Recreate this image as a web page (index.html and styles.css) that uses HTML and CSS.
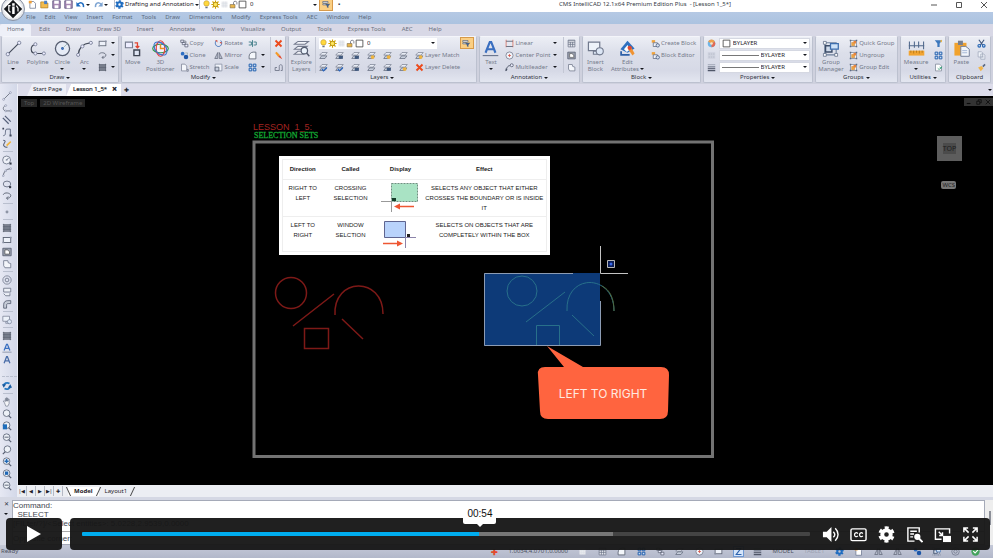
FILE: index.html
```html
<!DOCTYPE html>
<html lang="en">
<head>
<meta charset="utf-8">
<title>CMS IntelliCAD - Lesson 1_5</title>
<link rel="stylesheet" href="styles.css">
</head>
<body>
<svg class="defs" aria-hidden="true">
  <symbol id="line" viewBox="0 0 24 24"><path d="M4 20 20 4" stroke="#444b5a" stroke-width="1.6"/><g fill="#eef" stroke="#8289a0" stroke-width="1.4"><circle cx="4" cy="20" r="2.4"/><circle cx="20" cy="4" r="2.4"/></g></symbol>
  <symbol id="pline" viewBox="0 0 24 24"><path d="M20 19H10C1 19 1 8 9 6" stroke="#444b5a" stroke-width="1.6"/><g fill="#eef" stroke="#8289a0" stroke-width="1.4"><circle cx="21" cy="19" r="2.2"/><circle cx="9" cy="19" r="2.2"/><circle cx="9" cy="6" r="2.2"/></g></symbol>
  <symbol id="circle" viewBox="0 0 24 24"><circle cx="12" cy="12" r="10" fill="#e6ebf6" stroke="#555d70" stroke-width="1.8"/><circle cx="12" cy="12" r="2" fill="#2f62b5"/><path d="m12 12 7-7" stroke="#8aa" /></symbol>
  <symbol id="arc" viewBox="0 0 24 24"><path d="M3 21C4 11 10 5 20 4" stroke="#444b5a" stroke-width="1.8"/><g fill="#eef" stroke="#8289a0" stroke-width="1.4"><circle cx="3" cy="21" r="2.2"/><circle cx="9" cy="9" r="2.2"/><circle cx="21" cy="4" r="2.2"/></g></symbol>
  <symbol id="rect" viewBox="0 0 24 24"><rect x="3" y="6" width="18" height="12" fill="#eef2fa" stroke="#5b6272" stroke-width="2.2"/><path d="M1 16h4v4H1zM19 4h4v4h-4z" fill="#8b92a5"/></symbol>
  <symbol id="rev" viewBox="0 0 24 24"><path d="M3 9c2-7 18-5 18 2 0 5-6 7-10 6l3 4M11 17l4-4" stroke="#5b6272" stroke-width="2.2"/></symbol>
  <symbol id="hatch" viewBox="0 0 24 24"><path d="M4 4h16v16H4z" fill="#8b919f"/><path d="M2 4h20M2 8h20M2 12h20M2 16h20M2 20h20M4 2v20M20 2v20" stroke="#4d5463" stroke-width="1.6"/></symbol>
  <symbol id="move" viewBox="0 0 24 24"><path d="M2 3h10v8H2z" fill="#eef" stroke="#777e90" stroke-width="1.6"/><path d="M14 14h8v8h-8z" fill="#dfe5f3" stroke="#3e4452" stroke-width="2"/><path d="M15 4h4v7M16.500 8.500 19 11l2.500-2.500" stroke="#e3442f" stroke-width="1.8"/></symbol>
  <symbol id="orbit" viewBox="0 0 24 24"><circle cx="12" cy="12" r="8.500" fill="#f3f1fa" stroke="#b25ac0" stroke-width="1.300"/><ellipse cx="12" cy="12" rx="11" ry="6" stroke="#2e9b4b" stroke-width="1.600"/><ellipse cx="12" cy="12" rx="6" ry="11" stroke="#e5453b" stroke-width="1.600"/><ellipse cx="12" cy="12" rx="11" ry="7" stroke="#3a74d0" stroke-width="1.500" transform="rotate(45 12 12)"/><path d="M12 6v6h5" stroke="#e69022" stroke-width="2"/></symbol>
  <symbol id="copy" viewBox="0 0 24 24"><path d="M2 3h8v6H2zM6 9h8v6H6zM13 14h8v7h-8z" fill="#eef" stroke="#596072" stroke-width="2"/><path d="m11 5 5 1v5" stroke="#596072" stroke-width="1.600"/></symbol>
  <symbol id="clone" viewBox="0 0 24 24"><circle cx="7" cy="7" r="5" fill="#2d6fc4"/><circle cx="16" cy="16" r="6" fill="#1d57a8"/><path d="M14 5h6v5" stroke="#9aa" stroke-width="2"/></symbol>
  <symbol id="stretch" viewBox="0 0 24 24"><path d="M4 3h9l5 5v13H4z" fill="#f4f6fb" stroke="#7b8294" stroke-width="2"/><path d="M18 17h4v5h-4" stroke="#596072" stroke-width="1.600"/></symbol>
  <symbol id="rotate" viewBox="0 0 24 24"><path d="M6 4c-5 6-2 16 6 16s11-10 6-16" stroke="#3c6fb8" stroke-width="2.600"/><path d="M3 3h6v6zM15 8h5v6z" fill="#d84d3a"/></symbol>
  <symbol id="mirror" viewBox="0 0 24 24"><path d="M10 4v16H2zM14 4v16h8z" fill="#b8bfce" stroke="#596072" stroke-width="1.800"/></symbol>
  <symbol id="scale" viewBox="0 0 24 24"><path d="M3 3h18v18H3z" fill="#f0f3fa" stroke="#868da0" stroke-width="2"/><path d="M3 11h10v10H3z" fill="#c9d0df" stroke="#4f5668" stroke-width="2"/></symbol>
  <symbol id="trim" viewBox="0 0 24 24"><path d="M12 3v18M2 8h7v8H2M15 8h7v8h-7" stroke="#3d7a86" stroke-width="2.400"/></symbol>
  <symbol id="fillet" viewBox="0 0 24 24"><path d="M3 21V14C3 8 8 3 14 3h7v18z" fill="#f4f7fb" stroke="#586070" stroke-width="2.200"/></symbol>
  <symbol id="array" viewBox="0 0 24 24"><path d="M3 3h7v7H3zM14 3h7v7h-7zM3 14h7v7H3zM14 14h7v7h-7z" fill="#c8dcf5" stroke="#2160ad" stroke-width="2.600"/></symbol>
  <symbol id="cross" viewBox="0 0 24 24"><path d="m4 4 16 16M20 4 4 20" stroke="#ec4a1c" stroke-width="5"/></symbol>
  <symbol id="pencil" viewBox="0 0 24 24"><path d="m3 5 4-3 9 9-5 4z" fill="#f59a26"/><path d="m11 15 5-4 6 11z" fill="#e4492c"/></symbol>
  <symbol id="unlock" viewBox="0 0 24 24"><path d="M3 12h13v9H3z" fill="#e7b54b" stroke="#806c4c" stroke-width="1.600"/><path d="M12 12V7c0-5 9-5 9 0v5" stroke="#6c7080" stroke-width="2.200"/></symbol>
  <symbol id="hook" viewBox="0 0 24 24"><path d="M3 20h11V9c0-6 8-6 8 0v11h-4M3 20v-8h5" stroke="#6b7284" stroke-width="2.200"/></symbol>
  <symbol id="layers" viewBox="0 0 24 24"><g fill="#f3f5fa" stroke="#747b8e" stroke-width="1.500"><path d="m2 20 5-4h13l-5 4z"/><path d="m2 13 5-4h13l-5 4z"/><path d="m2 6 5-4h15l-5 4z"/></g><circle cx="16" cy="15" r="4.500" fill="#eaf2fb" stroke="#555d70" stroke-width="1.600"/><path d="m19 18 4 5" stroke="#555d70" stroke-width="2"/></symbol>
  <symbol id="bulb" viewBox="0 0 24 24"><path d="M8 16C3 11 4 2 12 2s9 9 4 14z" fill="#ffd83d" stroke="#b9902a" stroke-width="1.600"/><path d="M9 18h6v4H9z" fill="#687184"/></symbol>
  <symbol id="sun" viewBox="0 0 24 24"><path d="M12 1v22M1 12h22M4 4l16 16M20 4 4 20" stroke="#d5a400" stroke-width="3"/><circle cx="12" cy="12" r="6" fill="#ffe65c" stroke="#a47e00" stroke-width="2"/></symbol>
  <symbol id="faint" viewBox="0 0 24 24"><path d="M4 4h16v16H4z" fill="#e8eaef"/><path d="M4 9h16M4 15h16M9 4v16M15 4v16" stroke="#d8dbe3"/></symbol>
  <symbol id="square" viewBox="0 0 24 24"><path d="M3 3h18v18H3z" fill="#fff" stroke="#444" stroke-width="2.200"/></symbol>
  <symbol id="lay" viewBox="0 0 24 24"><path d="m2 11 6-7h14l-6 7z" fill="#e9edf5" stroke="#737a8c" stroke-width="1.800"/><path d="m2 20 5-7h14l-5 7z" fill="#c8cfdd" stroke="#596275" stroke-width="1.800"/></symbol>
  <symbol id="layb" viewBox="0 0 24 24"><use href="#lay"/><path d="m8 16 4 5 9-9" stroke="#2d67bd" stroke-width="3.500"/></symbol>
  <symbol id="layo" viewBox="0 0 24 24"><use href="#lay"/><circle cx="15" cy="16" r="5" fill="#efb43f"/></symbol>
  <symbol id="layd" viewBox="0 0 24 24"><use href="#lay"/><path d="M10 13h11v8H10z" fill="#40597e"/></symbol>
  <symbol id="funnel" viewBox="0 0 24 24"><path d="M2 4h14v4H2zM2 10h10v3H2z" fill="#fff" stroke="#44506a" stroke-width="1.600"/><path d="M8 10h14l-5 6v5l-4-2v-3z" fill="#486185"/></symbol>
  <symbol id="texta" viewBox="0 0 24 24"><path d="M5 18 11 3h2l6 15M8 13h8" stroke="#3a6fc0" stroke-width="3"/><path d="M1 22h22" stroke="#6d7790" stroke-width="1.600"/></symbol>
  <symbol id="linear" viewBox="0 0 24 24"><path d="M3 2v20M21 2v20" stroke="#d8604b" stroke-width="2"/><path d="M3 6h18M3 20h18" stroke="#5f687b" stroke-width="2.400"/><path d="M5 10h14v7H5z" fill="#e4e8f2"/></symbol>
  <symbol id="center" viewBox="0 0 24 24"><circle cx="12" cy="12" r="9.500" fill="#f1f4fa" stroke="#6d7589" stroke-width="2"/><path d="M12 8v8M8 12h8" stroke="#d45144" stroke-width="2"/></symbol>
  <symbol id="round" viewBox="0 0 24 24"><circle cx="11" cy="12" r="9.500" fill="#eef1f8" stroke="#6a7286" stroke-width="2"/><path d="M9 12h4M11 12l5-5" stroke="#56607a" stroke-width="2"/><path d="M18 18h5v5h-5z" fill="#2e3442"/></symbol>
  <symbol id="leader" viewBox="0 0 24 24"><path d="M3 21C5 9 9 7 14 7" stroke="#485063" stroke-width="2.400"/><circle cx="18" cy="6" r="4" fill="#eef" stroke="#485063" stroke-width="2"/><path d="m1 22 1-8 5 4z" fill="#485063"/></symbol>
  <symbol id="table" viewBox="0 0 24 24"><path d="M3 3h18v18H3z" fill="#f4f6fa" stroke="#6c7488" stroke-width="2"/><path d="M3 5h18M3 10h18M3 15h18M9 8v13M15 8v13" stroke="#6c7488" stroke-width="2"/></symbol>
  <symbol id="region" viewBox="0 0 24 24"><path d="M2 3h20v18H2z" fill="#9aa0ae" stroke="#555d70" stroke-width="2"/><path d="M7 7h6l5 4v6H7z" fill="#fff" stroke="#444" stroke-width="1.500"/></symbol>
  <symbol id="wipe" viewBox="0 0 24 24"><path d="M4 4h10l1 5 6 2v10H7l-3-5z" fill="#f3f5fa" stroke="#6f778a" stroke-width="2"/></symbol>
  <symbol id="block" viewBox="0 0 24 24"><path d="M2 3h16v12H2z" fill="#edf2fa" stroke="#71798d" stroke-width="1.700"/><path d="M9 16h9v4H9z" fill="#dce6f5" stroke="#71798d" stroke-width="1.500"/><circle cx="18" cy="16" r="5" fill="#dce6f5" stroke="#71798d" stroke-width="1.500"/></symbol>
  <symbol id="attr" viewBox="0 0 24 24"><path d="M12 1 22 12 12 18 2 13z" fill="#2e70c0"/><path d="m7 13 5-6 4 6-5 4z" fill="#fff"/><path d="m13 13 4-3 5 9-3 3z" fill="#f09332"/><circle cx="15" cy="11" r="3" fill="#de4935"/><path d="M3 16v5h12" stroke="#2e60a8" stroke-width="2.500"/></symbol>
  <symbol id="mkblock" viewBox="0 0 24 24"><path d="M2 3h9v7H2z" fill="#f0a33b"/><path d="M6 10h11v10H6z" fill="#eef2fa" stroke="#5c677e" stroke-width="2"/><circle cx="18" cy="17" r="4.500" fill="#d8e2f3" stroke="#41557a" stroke-width="2"/></symbol>
  <symbol id="wheel" viewBox="0 0 24 24"><circle cx="12" cy="12" r="10" fill="#6fb5e8"/><path d="M12 12 3 7A10 10 0 0 1 21 7z" fill="#f0a04b"/><path d="m12 12 9-5a10 10 0 0 1-9 15z" fill="#e46a55"/><circle cx="12" cy="12" r="3.500" fill="#f4e6c8"/></symbol>
  <symbol id="ltype" viewBox="0 0 24 24"><path d="M2 3h20v18H2z" fill="#cfd3df"/><path d="M4 8h16M4 16h16" stroke="#b0b5c3" stroke-width="2" stroke-dasharray="4 2"/></symbol>
  <symbol id="lweight" viewBox="0 0 24 24"><path d="M2 4h20" stroke="#666d80"/><path d="M2 9h20" stroke="#666d80" stroke-width="2"/><path d="M2 14h20" stroke="#4f5668" stroke-width="3"/><path d="M2 20h20" stroke="#4f5668" stroke-width="4"/></symbol>
  <symbol id="group" viewBox="0 0 24 24"><path d="M4 4h16v17H4z" stroke="#6c7f9b" stroke-width="1.500"/><path d="M5 8h9v9H5z" fill="#cfdaea" stroke="#3c4c68" stroke-width="2"/><path d="M12 5h11v8H12z" fill="#cfe3f8" stroke="#3f6fae" stroke-width="1.800"/><path d="M2 2h4v4H2zM18 19h4v4h-4zM2 19h4v4H2z" fill="#fff" stroke="#52617b"/></symbol>
  <symbol id="qgroup" viewBox="0 0 24 24"><path d="M4 4h16v16H4z" fill="#f7f8fb" stroke="#6f7c92" stroke-width="1.800"/><path d="M7 9h8v9H7z" fill="#f0a743" stroke="#a86a23"/><path d="M12 5h7v7h-7z" fill="#e9843b"/><path d="M2 2h4v4H2zM18 2h4v4h-4zM2 18h4v4H2zM18 18h4v4h-4z" fill="#5d6b83"/></symbol>
  <symbol id="measure" viewBox="0 0 24 24"><path d="M2 2v11M9 2v9M15 2v9M22 2v11M1 8h22" stroke="#51698c" stroke-width="1.500"/><path d="M1 15h22v7H1z" fill="#f1a431"/><path d="M4 15v3M8 15v4M12 15v3M16 15v4M20 15v3" stroke="#a56c12"/></symbol>
  <symbol id="filter" viewBox="0 0 24 24"><path d="M2 3h20l-7 9v9h-6v-9z" fill="#3c78bd"/><path d="m15 5 6-3v7z" fill="#f2b63c"/></symbol>
  <symbol id="refresh" viewBox="0 0 24 24"><path d="M4 3h11l5 5v13H4z" fill="#fff" stroke="#7c8597" stroke-width="2"/><path d="M10 14c2 4 8 3 9-2M21 10l-2 4-4-3" stroke="#2d9c72" stroke-width="2.400"/></symbol>
  <symbol id="paste" viewBox="0 0 24 24"><path d="M2 4h17v18H2z" fill="#f1a22d"/><path d="M7 1h7v6H7z" fill="#777f90"/><path d="M11 9h7l5 4v10H11z" fill="#f1f5fb" stroke="#74819a" stroke-width="1.400"/><path d="M13 15h7M13 18h7" stroke="#86a0c8"/></symbol>
  <symbol id="cut" viewBox="0 0 24 24"><path d="m5 2 10 14M19 2 9 16" stroke="#3f567c" stroke-width="3"/><circle cx="6" cy="18" r="3.500" stroke="#2264b4" stroke-width="3"/><circle cx="18" cy="18" r="3.500" stroke="#2264b4" stroke-width="3"/></symbol>
  <symbol id="pages" viewBox="0 0 24 24"><path d="M3 2h9l3 3v11H3zM10 8h8l3 3v11H10z" fill="#eef2f9" stroke="#98a1b5" stroke-width="1.800"/><path d="M12 14h6M12 18h6" stroke="#98a1b5"/></symbol>
  <symbol id="brush" viewBox="0 0 24 24"><path d="m14 8 6-6 3 3-6 6z" fill="#586782"/><path d="m3 12 9-4 5 6-7 8z" fill="#f2b54a"/></symbol>
  <symbol id="new" viewBox="0 0 24 24"><path d="M5 4h10l5 5v13H5z" fill="#fff" stroke="#6b7690" stroke-width="2"/><path d="M2 2h8v7H2z" fill="#f0a13a"/></symbol>
  <symbol id="open" viewBox="0 0 24 24"><path d="M2 5h8l3 3h8v13H2z" fill="#f3bb4d" stroke="#b1802a" stroke-width="2"/><path d="M11 2h8v9h-8z" fill="#4b7fc4"/></symbol>
  <symbol id="save" viewBox="0 0 24 24"><path d="M2 2h20v20H2z" fill="#a98bb6" stroke="#514b78" stroke-width="2"/><path d="M6 2h12v8H6zM7 14h10v8H7z" fill="#fff"/></symbol>
  <symbol id="undo" viewBox="0 0 24 24"><path d="M5 11c8-7 16-3 15 8" stroke="currentColor" stroke-width="4"/><path d="M1 5v12h12z" fill="currentColor"/></symbol>
  <symbol id="gear" viewBox="0 0 24 24"><circle cx="12" cy="12" r="9.500" stroke="currentColor" stroke-width="4" stroke-dasharray="5.400 4.550" stroke-dashoffset="2.700" transform="rotate(30 12 12)"/><circle cx="12" cy="12" r="6" stroke="currentColor" stroke-width="5.500"/></symbol>
  <symbol id="para" viewBox="0 0 24 24"><path d="m2 7 14 14M7 2l14 14" stroke="#56607a" stroke-width="3"/></symbol>
  <symbol id="spline" viewBox="0 0 24 24"><path d="M3 21c9 0 2-16 9-16h8v15" stroke="#56607a" stroke-width="2.200"/><path d="M1 2h4v4H1zM18 18h5v5h-5z" fill="#3d4558"/></symbol>
  <symbol id="sketch" viewBox="0 0 24 24"><path d="M3 3c12 2-4 9 2 14 4 4 6 3 8 2" stroke="#56607a" stroke-width="2.500"/><path d="m10 14 10-9 2 3-10 10z" fill="#f0b43d"/></symbol>
  <symbol id="ell" viewBox="0 0 24 24"><ellipse cx="12" cy="12" rx="9" ry="7" stroke="#6a7286" stroke-width="2.200"/><path d="M17 17h5v5h-5z" fill="#2e3442"/></symbol>
  <symbol id="dot" viewBox="0 0 24 24"><circle cx="12" cy="12" r="3.500" fill="#8e95a5"/></symbol>
  <symbol id="ring" viewBox="0 0 24 24"><circle cx="12" cy="12" r="10" stroke="#6a7286" stroke-width="1.800"/><circle cx="12" cy="12" r="4.500" stroke="#6a7286" stroke-width="2"/></symbol>
  <symbol id="sweep" viewBox="0 0 24 24"><path d="M4 3h17v9H4zM4 16l5 5h10v-6" fill="#edf0f6" stroke="#6a7286" stroke-width="2"/></symbol>
  <symbol id="pipe" viewBox="0 0 24 24"><path d="M4 22V14C4 7 8 4 14 4h7v7h-6c-3 0-4 1-4 4v7z" fill="#c6ccd8" stroke="#535c70" stroke-width="2"/></symbol>
  <symbol id="recycle" viewBox="0 0 24 24"><path d="M4 12C4 5 12 3 18 6M20 12c0 7-8 9-14 6" stroke="#2678c1" stroke-width="4.500"/><path d="M0 8h10l-6 8zM24 16H14l6-8z" fill="#195a9f"/></symbol>
  <symbol id="hand" viewBox="0 0 24 24"><path d="M6 14 3 10l2-1 3 2V4h2v6V2h2v8V3h2v7l1-5h2v11l-3 6H9z" fill="#f4f5f8" stroke="#697083" stroke-width="1.500"/></symbol>
  <symbol id="zoom" viewBox="0 0 24 24"><circle cx="11" cy="10" r="8" fill="#edf1f7" stroke="#666e81" stroke-width="2.200"/><path d="m16 16 6 6" stroke="#555d70" stroke-width="3"/></symbol>
  <symbol id="zoomb" viewBox="0 0 24 24"><use href="#zoom"/><path d="M11 5v10M6 10h10" stroke="#1f67b5" stroke-width="3.500"/></symbol>
  <symbol id="zoome" viewBox="0 0 24 24"><use href="#zoom"/><path d="M7 6h8v8H7z" fill="#1f67b5"/></symbol>
  <symbol id="zoomw" viewBox="0 0 24 24"><use href="#zoom"/><path d="M2 8h10v12H2z" fill="#1e6dbb"/></symbol>
  <symbol id="zoomm" viewBox="0 0 24 24"><use href="#zoom"/><path d="M6 10h10" stroke="#666e81" stroke-width="2.500"/></symbol>
</svg>

<div class="app">
  <header class="titlebar">
    <button class="logo" aria-label="Application menu"><svg viewBox="0 0 24 24"><path d="M12 1 23 12 12 23 1 12z" fill="#15171b"/><path d="M11 9h3v9h-3zM11 5h3v3h-3z" fill="#fff"/><path d="M9 8H7v6l2 2M16 8l2 3v4" stroke="#fff" stroke-width="1.500"/></svg></button>
    <div class="quick">
      <button aria-label="New"><svg class="s"><use href="#new"/></svg></button>
      <button aria-label="Open"><svg class="s"><use href="#open"/></svg></button>
      <button aria-label="Save"><svg class="s"><use href="#save"/></svg></button>
      <button aria-label="Save As"><svg class="s"><use href="#save"/></svg></button>
      <button class="blue" aria-label="Undo"><svg class="s"><use href="#undo"/></svg><i class="caret"></i></button>
      <button class="pale" aria-label="Redo"><svg class="s flip"><use href="#undo"/></svg><i class="caret"></i></button>
    </div>
    <div class="pick space blue"><svg class="s"><use href="#gear"/></svg><select aria-label="Workspace"><option>Drafting and Annotation</option></select><i class="caret"></i></div>
    <div class="pick toplayer"><svg class="s"><use href="#bulb"/></svg><svg class="s"><use href="#sun"/></svg><svg class="s"><use href="#faint"/></svg><svg class="s"><use href="#unlock"/></svg><svg class="s"><use href="#square"/></svg><select aria-label="Current layer"><option>0</option></select><i class="caret"></i></div>
    <button class="hot" aria-label="Layer filter"><svg class="s"><use href="#funnel"/></svg></button>
    <button class="more" aria-label="Customize">▪</button>
    <h1>CMS IntelliCAD 12.1x64 Premium Edition Plus&nbsp; - [Lesson 1_5*]</h1>
    <div class="winctl"><button aria-label="Minimize"><svg viewBox="0 0 8 8"><path d="M1 4h6" stroke="#555"/></svg></button><button aria-label="Maximize"><svg viewBox="0 0 8 8"><path d="M1.500 1.500h5v5h-5z" stroke="#555"/></svg></button><button aria-label="Close"><svg viewBox="0 0 8 8"><path d="m1 1 6 6M7 1 1 7" stroke="#555"/></svg></button></div>
  </header>

  <nav class="menubar"><a href="#">File</a><a href="#">Edit</a><a href="#">View</a><a href="#">Insert</a><a href="#">Format</a><a href="#">Tools</a><a href="#">Draw</a><a href="#">Dimensions</a><a href="#">Modify</a><a href="#">Express Tools</a><a href="#">AEC</a><a href="#">Window</a><a href="#">Help</a></nav>
  <nav class="tabs"><a class="on" href="#">Home</a><a href="#">Edit</a><a href="#">Draw</a><a href="#">Draw 3D</a><a href="#">Insert</a><a href="#">Annotate</a><a href="#">View</a><a href="#">Visualize</a><a href="#">Output</a><a href="#">Tools</a><a href="#">Express Tools</a><a href="#">AEC</a><a href="#">Help</a></nav>

  <section class="ribbon">
    <div class="panel"><div class="tools">
      <button class="big"><svg><use href="#line"/></svg>Line<i class="caret"></i></button>
      <button class="big"><svg><use href="#pline"/></svg>Polyline</button>
      <button class="big"><svg><use href="#circle"/></svg>Circle<i class="caret"></i></button>
      <button class="big"><svg><use href="#arc"/></svg>Arc<i class="caret"></i></button>
      <div class="col"><button aria-label="Rectangle"><svg class="s"><use href="#rect"/></svg><i class="caret"></i></button><button aria-label="Revision cloud"><svg class="s"><use href="#rev"/></svg><i class="caret"></i></button><button aria-label="Hatch"><svg class="s"><use href="#hatch"/></svg><i class="caret"></i></button></div>
    </div><button class="cap">Draw<i class="caret"></i></button></div>

    <div class="panel"><div class="tools">
      <button class="big"><svg><use href="#move"/></svg>Move</button>
      <button class="big"><svg><use href="#orbit"/></svg>3D<br>Positioner</button>
      <div class="col"><button><svg class="s"><use href="#copy"/></svg>Copy</button><button><svg class="s"><use href="#clone"/></svg>Clone</button><button><svg class="s"><use href="#stretch"/></svg>Stretch</button></div>
      <div class="col"><button><svg class="s"><use href="#rotate"/></svg>Rotate</button><button><svg class="s"><use href="#mirror"/></svg>Mirror</button><button><svg class="s"><use href="#scale"/></svg>Scale</button></div>
      <div class="col"><button aria-label="Trim"><svg class="s"><use href="#trim"/></svg></button><button aria-label="Fillet"><svg class="s"><use href="#fillet"/></svg><i class="caret"></i></button><button aria-label="Array"><svg class="s"><use href="#array"/></svg><i class="caret"></i></button></div>
      <div class="col ruled"><button aria-label="Erase"><svg class="s"><use href="#cross"/></svg></button><button aria-label="Explode"><svg class="s"><use href="#pencil"/></svg></button><button aria-label="Join"><svg class="s"><use href="#hook"/></svg></button></div>
    </div><button class="cap">Modify<i class="caret"></i></button></div>

    <div class="panel"><div class="tools">
      <button class="big"><svg><use href="#layers"/></svg>Explore<br>Layers</button>
      <div class="layergrid ruled">
        <div class="layerrow"><div class="pick"><svg class="s"><use href="#bulb"/></svg><svg class="s"><use href="#sun"/></svg><svg class="s"><use href="#faint"/></svg><svg class="s"><use href="#unlock"/></svg><svg class="s"><use href="#square"/></svg><select aria-label="Layer"><option>0</option></select><i class="caret"></i></div><button class="hot" aria-label="Layer filter"><svg class="s"><use href="#funnel"/></svg></button></div>
        <div class="layericons"><button aria-label="Isolate"><svg class="s"><use href="#lay"/></svg></button><button aria-label="Previous"><svg class="s"><use href="#layd"/></svg></button><button aria-label="State"><svg class="s"><use href="#layd"/></svg></button><button aria-label="Off"><svg class="s"><use href="#layo"/></svg></button><button aria-label="Freeze"><svg class="s"><use href="#layo"/></svg></button><button aria-label="Thaw"><svg class="s"><use href="#lay"/></svg></button><button><svg class="s"><use href="#layo"/></svg>Layer Match</button></div>
        <div class="layericons"><button aria-label="Set current"><svg class="s"><use href="#layb"/></svg></button><button aria-label="Walk"><svg class="s"><use href="#layb"/></svg></button><button aria-label="Merge"><svg class="s"><use href="#layd"/></svg></button><button aria-label="Lock"><svg class="s"><use href="#lay"/></svg></button><button aria-label="Unlock"><svg class="s"><use href="#layd"/></svg></button><button aria-label="On"><svg class="s"><use href="#layo"/></svg></button><button><svg class="s"><use href="#cross"/></svg>Layer Delete</button></div>
      </div>
    </div><button class="cap">Layers<i class="caret"></i></button></div>

    <div class="panel"><div class="tools">
      <button class="big"><svg><use href="#texta"/></svg>Text<i class="caret"></i></button>
      <div class="col wide"><button><svg class="s"><use href="#linear"/></svg>Linear<i class="caret"></i></button><button><svg class="s"><use href="#center"/></svg>Center Point<i class="caret"></i></button><button><svg class="s"><use href="#leader"/></svg>Multileader<i class="caret"></i></button></div>
      <div class="col ruled"><button aria-label="Table"><svg class="s"><use href="#table"/></svg></button><button aria-label="Region"><svg class="s"><use href="#region"/></svg></button><button aria-label="Wipeout"><svg class="s"><use href="#wipe"/></svg></button></div>
    </div><button class="cap">Annotation<i class="caret"></i></button></div>

    <div class="panel"><div class="tools">
      <button class="big"><svg><use href="#block"/></svg>Insert<br>Block</button>
      <button class="big"><svg><use href="#attr"/></svg>Edit<span>Attributes<i class="caret"></i></span></button>
      <div class="col"><button><svg class="s"><use href="#mkblock"/></svg>Create Block</button><button><svg class="s"><use href="#mkblock"/></svg>Block Editor</button></div>
    </div><button class="cap">Block<i class="caret"></i></button></div>

    <div class="panel"><div class="tools props">
      <div class="prop"><svg class="s"><use href="#wheel"/></svg><div class="pick"><svg class="s"><use href="#square"/></svg><select aria-label="Color"><option>BYLAYER</option></select><i class="caret"></i></div></div>
      <div class="prop"><svg class="s"><use href="#ltype"/></svg><div class="pick"><i class="rule"></i><select class="short" aria-label="Linetype"><option>BYLAYER</option></select><i class="caret"></i></div></div>
      <div class="prop"><svg class="s"><use href="#lweight"/></svg><div class="pick"><i class="rule"></i><select class="short" aria-label="Lineweight"><option>BYLAYER</option></select><i class="caret"></i></div></div>
    </div><button class="cap">Properties<i class="caret"></i></button></div>

    <div class="panel"><div class="tools">
      <button class="big"><svg><use href="#group"/></svg>Group<br>Manager</button>
      <div class="col"><button><svg class="s"><use href="#qgroup"/></svg>Quick Group</button><button><svg class="s"><use href="#qgroup"/></svg>Ungroup</button><button><svg class="s"><use href="#qgroup"/></svg>Group Edit</button></div>
    </div><button class="cap">Groups<i class="caret"></i></button></div>

    <div class="panel"><div class="tools">
      <button class="big"><svg><use href="#measure"/></svg>Measure<i class="caret"></i></button>
      <div class="col"><button aria-label="Quick select"><svg class="s"><use href="#filter"/></svg></button><button aria-label="Select all"><svg class="s"><use href="#array"/></svg></button><button aria-label="Regenerate"><svg class="s"><use href="#refresh"/></svg></button></div>
    </div><button class="cap">Utilities<i class="caret"></i></button></div>

    <div class="panel"><div class="tools">
      <button class="big"><svg><use href="#paste"/></svg>Paste</button>
      <div class="col"><button aria-label="Cut"><svg class="s"><use href="#cut"/></svg></button><button aria-label="Copy"><svg class="s"><use href="#pages"/></svg></button><button aria-label="Match"><svg class="s"><use href="#brush"/></svg></button></div>
    </div><button class="cap">Clipboard</button></div>
  </section>

  <main class="work">
    <aside class="dock">
      <button aria-label="Line"><svg><use href="#line"/></svg></button><button aria-label="Polyline"><svg><use href="#pline"/></svg></button><button aria-label="Parallel"><svg><use href="#para"/></svg></button><button aria-label="Spline"><svg><use href="#spline"/></svg></button><button aria-label="Sketch"><svg><use href="#sketch"/></svg></button>
      <hr>
      <button aria-label="Circle"><svg><use href="#round"/></svg></button><button aria-label="Arc"><svg><use href="#arc"/></svg></button><button aria-label="Ellipse"><svg><use href="#ell"/></svg></button><button aria-label="Revision cloud"><svg><use href="#rev"/></svg></button>
      <hr>
      <button aria-label="Point"><svg><use href="#dot"/></svg></button>
      <hr>
      <button aria-label="Hatch"><svg><use href="#hatch"/></svg></button><button aria-label="Rectangle"><svg><use href="#rect"/></svg></button><button aria-label="Region"><svg><use href="#region"/></svg></button><button aria-label="Wipeout"><svg><use href="#wipe"/></svg></button>
      <hr>
      <button aria-label="Donut"><svg><use href="#ring"/></svg></button><button aria-label="Sweep"><svg><use href="#sweep"/></svg></button><button aria-label="Pipe"><svg><use href="#pipe"/></svg></button>
      <hr>
      <button aria-label="Block"><svg><use href="#block"/></svg></button>
      <hr>
      <button aria-label="Table"><svg><use href="#hatch"/></svg></button><button aria-label="Multiline text"><svg><use href="#texta"/></svg></button><button aria-label="Text"><svg viewBox="0 0 24 24"><path d="M5 20 11 4h2l6 16M8 14h8" stroke="#4a6da8" stroke-width="3"/></svg></button>
      <hr class="dots">
      <button aria-label="Regenerate"><svg><use href="#recycle"/></svg></button>
      <hr>
      <button aria-label="Pan"><svg><use href="#hand"/></svg></button><button aria-label="Zoom"><svg><use href="#zoom"/></svg></button><button aria-label="Zoom window"><svg><use href="#zoomw"/></svg></button><button aria-label="Zoom previous"><svg><use href="#zoomm"/></svg></button><button aria-label="Zoom dynamic"><svg class="flip"><use href="#zoom"/></svg></button><button aria-label="Zoom in"><svg><use href="#zoomb"/></svg></button><button aria-label="Zoom extents"><svg><use href="#zoome"/></svg></button><button aria-label="Zoom out"><svg><use href="#zoomm"/></svg></button>
    </aside>
    <div class="doc">
      <nav class="doctabs"><a href="#">Start Page</a><a class="on" href="#">Lesson 1_5*<b>✕</b></a><button aria-label="New tab">✚</button><i class="caret"></i></nav>
      <div class="canvas">
        <div class="viewtags"><button>Top</button><button>2D Wireframe</button></div>
        <div class="mdi"><button aria-label="Minimize"><svg viewBox="0 0 8 8"><path d="M1 6h5" stroke="#0a0a0a" stroke-width="1.500"/></svg></button><button aria-label="Restore"><svg viewBox="0 0 8 8"><path d="M1 3h4v4H1zM3 3V1h4v4H5" stroke="#0a0a0a"/></svg></button><button aria-label="Close"><svg viewBox="0 0 8 8"><path d="m1 1 6 6M7 1 1 7" stroke="#0a0a0a"/></svg></button></div>
        <button class="cube"><span>TOP</span></button>
        <button class="wcs">WCS</button>
        <svg class="drawing" width="720" height="389" viewBox="18 96 720 389">
          <text x="253" y="130" class="t1">LESSON&nbsp; 1_5:</text>
          <text x="254" y="138" class="t2">SELECTION SETS</text>
          <path d="M254 142h458.500v314.500H254z" stroke="#737373" stroke-width="3"/>
          <g stroke="#7d1917" stroke-width="1.500">
            <circle cx="291" cy="293" r="15.500"/><path d="M334 294 293 326M335 315c-2-38 48-39 48-1M304.500 328.500h24v20h-24zM342 319l21 20"/>
          </g>
          <path d="M484 273h116v73H484z" fill="#0d3a78"/>
          <g stroke="#28708a"><circle cx="522" cy="291" r="15"/><path d="M565 292 526 322M567 311c-2-38 47-38 47 0M536.500 346v-20.500h23V346M572 315l22 21"/></g>
          <path d="M602 286c8 4 12 12 12 25" stroke="#50683c"/>
          <path d="M573 273.500h-88.500v72h116V301" stroke="#8c9cb4"/>
          <path d="M600.500 246v27.500H628" stroke="#c4c4c4"/>
          <path d="M607.500 260.500h7v7h-7z" fill="#0a1c55" stroke="#b8b8b8"/><circle cx="611" cy="264" r="1.500" fill="#3c68e8"/>
        </svg>
        <div class="sheet"><table>
          <thead><tr><th>Direction</th><th>Called</th><th>Display</th><th>Effect</th></tr></thead>
          <tbody>
            <tr><td>RIGHT TO LEFT</td><td>CROSSING SELECTION</td><td><svg width="38" height="30" viewBox="0 2 38 30"><path d="M10.500 2.500h26v18h-26z" fill="#a9e3c4" stroke="#6f8f80" stroke-dasharray="2 1"/><path d="M0 20.500h10.500V31" stroke="#999"/><path d="M11 17h4v3h-4z" fill="#143c28"/><path d="M33 25.500H18" stroke="#ee5733" stroke-width="1.500"/><path d="m13 25.500 6-3v6z" fill="#ee5733"/></svg></td><td>SELECTS ANY OBJECT THAT EITHER CROSSES THE BOUNDARY OR IS INSIDE IT</td></tr>
            <tr><td>LEFT TO RIGHT</td><td>WINDOW SELCTION</td><td><svg width="38" height="28" viewBox="0 0 38 28"><path d="M3.500 1.500h21v16h-21z" fill="#b9d3fb" stroke="#5f6590"/><path d="M35 17.500H24.500V28" stroke="#8c84aa"/><path d="M26 14h3v3h-3z" fill="#222"/><path d="M2 23.500h15" stroke="#ee5733" stroke-width="1.500"/><path d="m22 23.500-6-3v6z" fill="#ee5733"/></svg></td><td>SELECTS ON OBJECTS THAT ARE COMPLETELY WITHIN THE BOX</td></tr>
          </tbody>
        </table></div>
        <div class="callout"><svg viewBox="0 0 132 73" width="132" height="73"><path d="M10 0 46 21h78q8 0 8 8l-1 36q0 8-8 8H11q-8 0-8-8L1 29q-1-8 7-8h19z" fill="#ff643f"/></svg><p>LEFT TO RIGHT</p></div>
      </div>
      <nav class="layouts"><button>|◀</button><button>◀</button><button>▶</button><button>▶|</button><button>✚</button><a class="on" href="#">Model</a><a href="#">Layout1</a></nav>
    </div>
  </main>

  <section class="cmd">
    <div class="grip"><button aria-label="Close">✕</button><i class="caret"></i></div>
    <div class="log"><p>Command:</p><p>_SELECT</p><p>[FILter/?]/&lt;Select entities&gt;: 5.0228,2.9539,0.0000</p><label>Opposite corner: <input aria-label="Command input"></label></div>
    <div class="scroll"></div>
  </section>
  <footer class="status">
    <span>Ready</span>
    <div class="stat"><b class="plus">✚</b><span>1.0034,4.0701,0.0000</span>
      <svg class="s"><use href="#faint"/></svg><svg class="s"><use href="#table"/></svg><svg class="s"><use href="#fillet"/></svg><svg class="s"><use href="#array"/></svg><svg class="s"><use href="#copy"/></svg><svg class="s"><use href="#lay"/></svg><svg class="s"><use href="#center"/></svg><svg class="s"><use href="#rect"/></svg><svg class="s lit" viewBox="0 0 24 24"><path d="M5 4h13L6 20h14" stroke="#2c62ad" stroke-width="3"/></svg><svg class="s"><use href="#lweight"/></svg>
      <span>MODEL</span><span class="dim">TABLET</span>
      <svg class="s blue"><use href="#gear"/></svg><svg class="s"><use href="#new"/></svg><svg class="s"><use href="#mirror"/></svg><svg class="s"><use href="#mirror"/></svg><svg class="s"><use href="#clone"/></svg><svg class="s"><use href="#group"/></svg><svg class="s"><use href="#ring"/></svg><svg class="s" viewBox="0 0 24 24"><circle cx="12" cy="12" r="11" fill="#43a35c"/><path d="m6 11 5 5 8-9" stroke="#fff" stroke-width="3"/></svg>
    </div>
  </footer>
</div>

<div class="player">
  <button class="play" aria-label="Play"><svg viewBox="0 0 16 16"><path d="M1 0v16l14-8z" fill="#fff"/></svg></button>
  <div class="bar">
    <div class="track"><input type="range" min="0" max="1000" value="546" aria-label="Progress"><output>00:54</output></div>
    <button aria-label="Volume"><svg viewBox="0 0 18 18"><path d="M1 6h4l5-5v16l-5-5H1z" fill="#fff"/><path d="M12 6c2 2 2 4 0 6M14 2.500c4 4 4 9 0 13" stroke="#fff" stroke-width="1.500"/></svg></button>
    <button aria-label="Captions"><svg viewBox="0 0 18 18"><rect x="1" y="3" width="16" height="12.500" rx="1.500" stroke="#fff" stroke-width="1.500"/><path d="M8.300 8C7 6.500 4.800 7 4.800 9.200s2.200 2.800 3.500 1.300M13.600 8c-1.300-1.500-3.500-1-3.500 1.200s2.200 2.800 3.500 1.300" stroke="#fff" stroke-width="1.300"/></svg></button>
    <button aria-label="Settings"><svg viewBox="0 0 24 24"><use href="#gear"/></svg></button>
    <button aria-label="Transcript"><svg viewBox="0 0 18 18"><path d="M9 16H2V2h12v5M4.500 5.500h7M4.500 8.500h4M4.500 11.500h3" stroke="#fff" stroke-width="1.500"/><circle cx="12" cy="11.500" r="3.300" fill="#fff"/><path d="m13.500 13 4 4" stroke="#fff" stroke-width="2"/></svg></button>
    <button aria-label="Picture in picture"><svg viewBox="0 0 18 18"><path d="M8 14H1.500V3h15v5M5 6l4 4M9 6.500V10H5.500" stroke="#fff" stroke-width="1.500"/><path d="M9.500 10.500H18V17H9.500z" fill="#fff"/></svg></button>
    <button aria-label="Fullscreen"><svg viewBox="0 0 18 18"><path d="M2 6.500V2h4.500M2 2l5 5M11.500 2H16v4.500M16 2l-5 5M2 11.500V16h4.500M2 16l5-5M11.500 16H16v-4.500M16 16l-5-5" stroke="#fff" stroke-width="1.600"/></svg></button>
  </div>
</div>
</body>
</html>
```
FILE: styles.css
```css
* { box-sizing: border-box; }
body { margin: 0; background: #000; font: 6px/7px "Noto Sans", "Open Sans", sans-serif; color: #333945; position: relative; }
svg { fill: none; display: block; flex: none; }
.defs { position: absolute; width: 0; height: 0; }
button, select, input { font: inherit; color: inherit; background: none; border: 0; padding: 0; margin: 0; }
button { display: flex; align-items: center; }
a { color: inherit; text-decoration: none; }
p, h1 { margin: 0; font-weight: normal; font-size: inherit; }
.s { width: 9px; height: 9px; }
.flip { transform: scaleX(-1); }
.blue { color: #1f6cc0; }
.pale { color: #7da4d2; }
.caret { display: inline-block; width: 0; height: 0; border: 2px solid transparent; border-top-color: #14161c; border-bottom: 0; flex: none; }
.app { display: flex; flex-direction: column; min-height: 100vh; }

/* title bar */
.titlebar { height: 12px; background: #fff; display: flex; align-items: center; padding: 0 5px 3px 28px; position: relative; }
.logo { position: absolute; left: 1px; top: -3px; width: 24px; height: 24px; border-radius: 50%; background: radial-gradient(#fff 50%, #a4abb9); border: 1px solid #8b93a4; justify-content: center; z-index: 2; }
.logo svg { width: 20px; height: 20px; }
.quick { display: flex; gap: 3px; width: 86px; }
.quick .caret { margin: 0 1px; }
.pick { display: flex; align-items: center; background: #fff; min-width: 0; }
.pick select { appearance: none; flex: 1; min-width: 0; color: #1d2027; }
.pick .caret { margin: 0 2px; }
.space { border-left: 1px solid #b9bfcc; border-right: 1px solid #b9bfcc; width: 86px; }
.space .caret { margin: 0; }
.toplayer { width: 117px; margin-left: 2px; }
.pick .s + select { padding-left: 3px; }
.space .s + select { padding-left: 1px; }
.hot { background: #fbcf83; border: 1px solid #d79a4a; width: 14px; height: 12px; justify-content: center; flex: none; }
.more { margin-left: 5px; }
.titlebar h1 { flex: 1; text-align: center; padding-left: 20px; white-space: nowrap; }
.winctl { display: flex; gap: 17px; }
.winctl svg { width: 8px; height: 8px; }

.menubar { height: 12px; background: linear-gradient(#b5c9e4, #abc3e0); display: flex; align-items: center; gap: 9px; padding: 0 0 2px 26px; color: #5b6a80; }
.tabs { height: 12px; background: #d8d8e6; display: flex; color: #6c7180; }
.tabs a { padding: 2px 8px 3px; }
.tabs .on { background: #eef0f8; padding: 2px 7px 3px; border-radius: 2px 2px 0 0; }

/* ribbon */
.ribbon { display: grid; grid-template-columns: 118fr 166fr 189fr 102fr 119fr 110fr 84fr 46fr 43fr; gap: 2px; padding: 0 2px 2px 1px; background: #cfd1de; height: 48px; }
.panel { display: flex; flex-direction: column; min-width: 0; background: linear-gradient(#eceef5, #dcdfea 35%, #d6d9e6 75%, #e3e6f0); border: 1px solid #bcc1cf; border-top-color: #f4f5fa; border-radius: 2px; color: #757b8b; }
.tools { display: flex; flex: 1; align-items: flex-start; justify-content: space-around; }
.cap { justify-content: center; gap: 2px; height: 9px; color: #30343e; width: 100%; }
.big { flex-direction: column; line-height: 7px; text-align: center; padding-top: 3px; }
.big > svg { width: 17px; height: 17px; margin-bottom: 2px; }
.big > .caret { margin-top: 2px; }
.big span .caret { margin: 0 0 1px 1px; }
.col button { height: 12px; gap: 1px; white-space: nowrap; width: 100%; }
.col button .caret { margin-left: 3px; }
.wide button .caret { margin-left: auto; }
.wide { width: 52px; }
.ruled { border-left: 1px solid #c3c7d4; padding-left: 3px; }
.layergrid { width: 159px; }
.layerrow { display: flex; justify-content: space-between; height: 12px; align-items: center; }
.layerrow .pick { width: 118px; height: 11px; }
.layericons { display: grid; grid-template-columns: repeat(6, 16px) 1fr; height: 12px; }
.layericons button { white-space: nowrap; gap: 1px; }
.props { flex-direction: column; justify-content: flex-start; align-items: stretch; padding: 0 2px 0 3px; }
.prop { display: flex; align-items: center; gap: 3px; height: 12px; }
.prop .pick { flex: 1; height: 11px; border: 1px solid #d5d8e2; gap: 2px; padding-left: 2px; }
.prop .pick .s + select { padding-left: 0; }
.pick .rule { flex: 1; height: 1px; background: #777; }
.pick .short { flex: none; width: 38px; }

/* work area */
.work { display: flex; height: 413px; background: #dcdfeb; }
.dock { width: 18px; flex: none; border-right: 1px solid #eceef6; background: linear-gradient(90deg, #e6e8f3, #d3d8e8); padding: 6px 0 0 2px; }
.dock button { height: 12px; }
.dock svg { width: 10px; height: 10px; }
.dock hr { border: 0; border-top: 1px solid #b9bfce; margin: 1px 4px 2px 1px; }
.dock .dots { border-top: 1px dashed #b9bfce; margin: 10px 0 3px; }
.doc { flex: 1; min-width: 0; display: flex; flex-direction: column; }
.doctabs { height: 12px; display: flex; align-items: center; background: #dcdcea; padding-left: 9px; color: #22252d; }
.doctabs a { padding: 2px 4px 3px 6px; background: #eeeff6; clip-path: polygon(5px 0, 100% 0, 100% 100%, 0 100%); }
.doctabs .on { background: #fff; padding-left: 7px; -webkit-text-stroke: 0.2px #22252d; }
.doctabs b { margin-left: 5px; }
.doctabs button { margin-left: 3px; }
.doctabs > .caret { margin-left: auto; margin-right: 1px; }
.canvas { flex: 1; background: #000; position: relative; overflow: hidden; }
.viewtags { display: flex; gap: 3px; padding: 3px 0 0 3px; color: #555; }
.viewtags button { background: #262626; height: 8px; padding: 0 3px; }
.mdi { position: absolute; right: 0; top: 2px; display: flex; justify-content: space-between; background: #333; padding: 0 2px; height: 8px; width: 29px; }
.mdi svg { width: 6px; height: 6px; }
.cube { position: absolute; right: 31px; top: 40px; width: 25px; height: 25px; background: #5d5d5d; color: #1c1c1c; justify-content: center; font-size: 7px; }
.cube span { background: #4b4b4b; padding: 2px 0; }
.wcs { position: absolute; right: 37px; top: 85px; background: #777; color: #222; border-radius: 2px; height: 8px; font-size: 6px; padding: 0 1px; }
.drawing { position: absolute; left: 0; top: 0; }
.t1 { font: 9px "Liberation Sans", sans-serif; fill: #a32420; }
.t2 { font: 8px "Liberation Serif", serif; fill: #12a832; stroke: #12a832; stroke-width: 0.3px; }
.sheet { position: absolute; left: 261px; top: 60px; width: 271px; background: #fff; padding: 3px; color: #222; font: 6px/10px "Liberation Sans", sans-serif; }
.sheet table { border-collapse: collapse; width: 100%; table-layout: fixed; text-align: center; border: 1px solid #eee; }
.sheet th { height: 20px; padding: 0 0 1px; width: 56px; }
.sheet th:first-child { width: 40px; }
.sheet th:nth-child(3) { width: 44px; }
.sheet th:nth-child(4) { width: auto; }
.sheet tr { border-bottom: 1px solid #eee; }
.sheet td { padding: 3px 0; vertical-align: top; }
.sheet td:nth-child(2) { padding-left: 9px; padding-right: 9px; }
.sheet td:nth-child(3) { padding-left: 2px; }
.sheet td:nth-child(4) { padding-left: 2px; padding-right: 2px; }
.callout { position: absolute; left: 519px; top: 250px; color: #ffe9e0; font: 500 12px/15px Inter, sans-serif; }
.callout p { position: absolute; inset: 40px 0 auto; text-align: center; }
.layouts { height: 12px; display: flex; align-items: center; background: #eceef3; color: #1d2027; padding-left: 0; }
.layouts button { width: 9px; height: 10px; justify-content: center; border-right: 1px solid #b5b9c4; font-size: 5px; }
.layouts a { position: relative; padding: 1px 6px; }
.layouts a::after, .layouts .on::before { content: ""; position: absolute; right: 0; top: 0; height: 9px; border-right: 1px solid #444; transform: skewX(-25deg); }
.layouts .on::before { right: auto; left: 0; transform: skewX(25deg); }
.layouts .on { font-weight: bold; background: #fff; margin-left: 5px; }

.cmd { display: flex; height: 48px; background: #d5d8e4; padding-top: 3px; }
.grip { width: 12px; flex: none; display: flex; flex-direction: column; align-items: center; gap: 5px; padding-top: 1px; }
.log { flex: 1; background: #fff; border: 1px solid #a5aab8; color: #43464f; font: 8px/9px "Liberation Sans", sans-serif; }
.log label { display: flex; border-top: 1px solid #aaa; margin-top: 3px; padding-top: 2px; }
.scroll { width: 8px; background: linear-gradient(#eee 25%, #8d9099 25%, #8d9099 55%, #eee 55%); border: solid #eee; border-width: 0 2px 0 4px; }
.status { display: flex; height: 13px; align-items: center; justify-content: space-between; background: linear-gradient(#c5c9d8, #b2b8ca); padding: 0 13px 0 1px; color: #4c5160; }
.stat { display: flex; align-items: center; gap: 8px; flex: 0 1 489px; justify-content: space-between; }
.plus { color: #e34a2e; font-size: 8px; }
.lit { background: #d5e5fa; outline: 1px solid #6d98d3; }
.dim { color: #9ca2b2; }

/* video controls */
.player { position: absolute; left: 6px; right: 3px; bottom: 8px; display: flex; gap: 8px; z-index: 3; }
.player button { justify-content: center; color: #fff; }
.play, .bar { height: 32px; background: rgba(23, 23, 23, 0.96); border-radius: 4px; }
.player .play { width: 56px; }
.play svg { width: 16px; height: 16px; }
.bar { flex: 1; display: flex; align-items: center; padding: 0 6px 0 12px; }
.bar button { width: 28px; height: 32px; }
.bar button svg { width: 17px; height: 17px; }
.track { flex: 1; position: relative; margin-right: 6px; }
.track input { display: block; appearance: none; width: 100%; height: 4px; border-radius: 1px; background: linear-gradient(90deg, #00adef 54.600%, #777 54.600%, #777 73%, #444 73%); }
.track input::-webkit-slider-thumb { appearance: none; width: 1px; height: 4px; }
.track output { position: absolute; left: 54.600%; bottom: 12px; width: 33px; margin-left: -16px; background: #fff; color: #111; text-align: center; font: 10px/20px "Liberation Sans", sans-serif; border-radius: 2px; }
.track output::after { content: ""; position: absolute; left: 14px; top: 20px; border: 3px solid transparent; border-top-color: #fff; }
```
